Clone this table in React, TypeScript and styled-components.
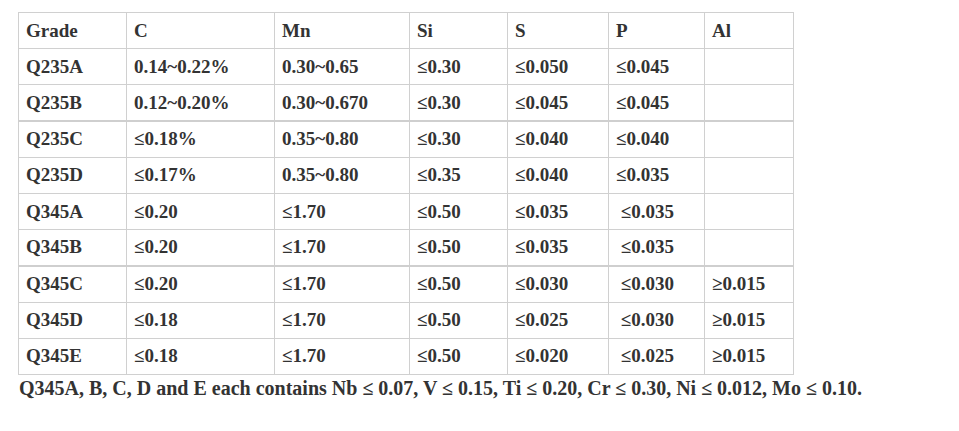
import React from "react";
import styled, { createGlobalStyle } from "styled-components";

const Global = createGlobalStyle`
  html, body { margin: 0; padding: 0; background: #fff; }
  body { font-family: "Liberation Serif", serif; color: #333; }
`;

const Page = styled.div`
  padding: 12px 0 0 18px;
  font-family: "Liberation Serif", serif;
`;

const Table = styled.table`
  border-collapse: collapse;
  table-layout: fixed;
  width: 775px;
  font-family: "Liberation Serif", serif;
  font-weight: 700;
  font-size: 19px;
  color: #333;
`;

const Row = styled.tr<{ $sep?: boolean }>`
  height: 36.2px;
  border-top: ${(p) => (p.$sep ? "2px" : "1px")} solid #cfcfcf;
`;

const Cell = styled.td`
  border: 1px solid #d0d0d0;
  padding: 0 0 0 7px;
  vertical-align: middle;
  white-space: nowrap;
  line-height: 20px;
  font-family: "Liberation Serif", serif;
`;

const Note = styled.p`
  margin: 2px 0 0 1px;
  font-family: "Liberation Serif", serif;
  font-size: 20px;
  font-weight: 700;
  color: #333;
`;

const widths = [108, 148, 135, 98, 101, 96, 89];
const header = ["Grade", "C", "Mn", "Si", "S", "P", "Al"];
const rows: string[][] = [
  ["Q235A", "0.14~0.22%", "0.30~0.65", "≤0.30", "≤0.050", "≤0.045", ""],
  ["Q235B", "0.12~0.20%", "0.30~0.670", "≤0.30", "≤0.045", "≤0.045", ""],
  ["Q235C", "≤0.18%", "0.35~0.80", "≤0.30", "≤0.040", "≤0.040", ""],
  ["Q235D", "≤0.17%", "0.35~0.80", "≤0.35", "≤0.040", "≤0.035", ""],
  ["Q345A", "≤0.20", "≤1.70", "≤0.50", "≤0.035", " ≤0.035", ""],
  ["Q345B", "≤0.20", "≤1.70", "≤0.50", "≤0.035", " ≤0.035", ""],
  ["Q345C", "≤0.20", "≤1.70", "≤0.50", "≤0.030", " ≤0.030", "≥0.015"],
  ["Q345D", "≤0.18", "≤1.70", "≤0.50", "≤0.025", " ≤0.030", "≥0.015"],
  ["Q345E", "≤0.18", "≤1.70", "≤0.50", "≤0.020", " ≤0.025", "≥0.015"],
];

export default function App() {
  return (
    <Page>
      <Global />
      <Table>
        <colgroup>
          {widths.map((w, i) => (
            <col key={i} style={{ width: w }} />
          ))}
        </colgroup>
        <tbody>
          <Row>
            {header.map((h) => (
              <Cell key={h}>{h}</Cell>
            ))}
          </Row>
          {rows.map((r, i) => (
            <Row key={r[0]} $sep={i === 2 || i === 6}>
              {r.map((c, j) => (
                <Cell key={j}>{c.startsWith(" ") ? <>&nbsp;{c.trim()}</> : c}</Cell>
              ))}
            </Row>
          ))}
        </tbody>
      </Table>
      <Note>
        Q345A, B, C, D and E each contains Nb ≤ 0.07, V ≤ 0.15, Ti ≤ 0.20, Cr ≤ 0.30, Ni ≤ 0.012, Mo ≤ 0.10.
      </Note>
    </Page>
  );
}
